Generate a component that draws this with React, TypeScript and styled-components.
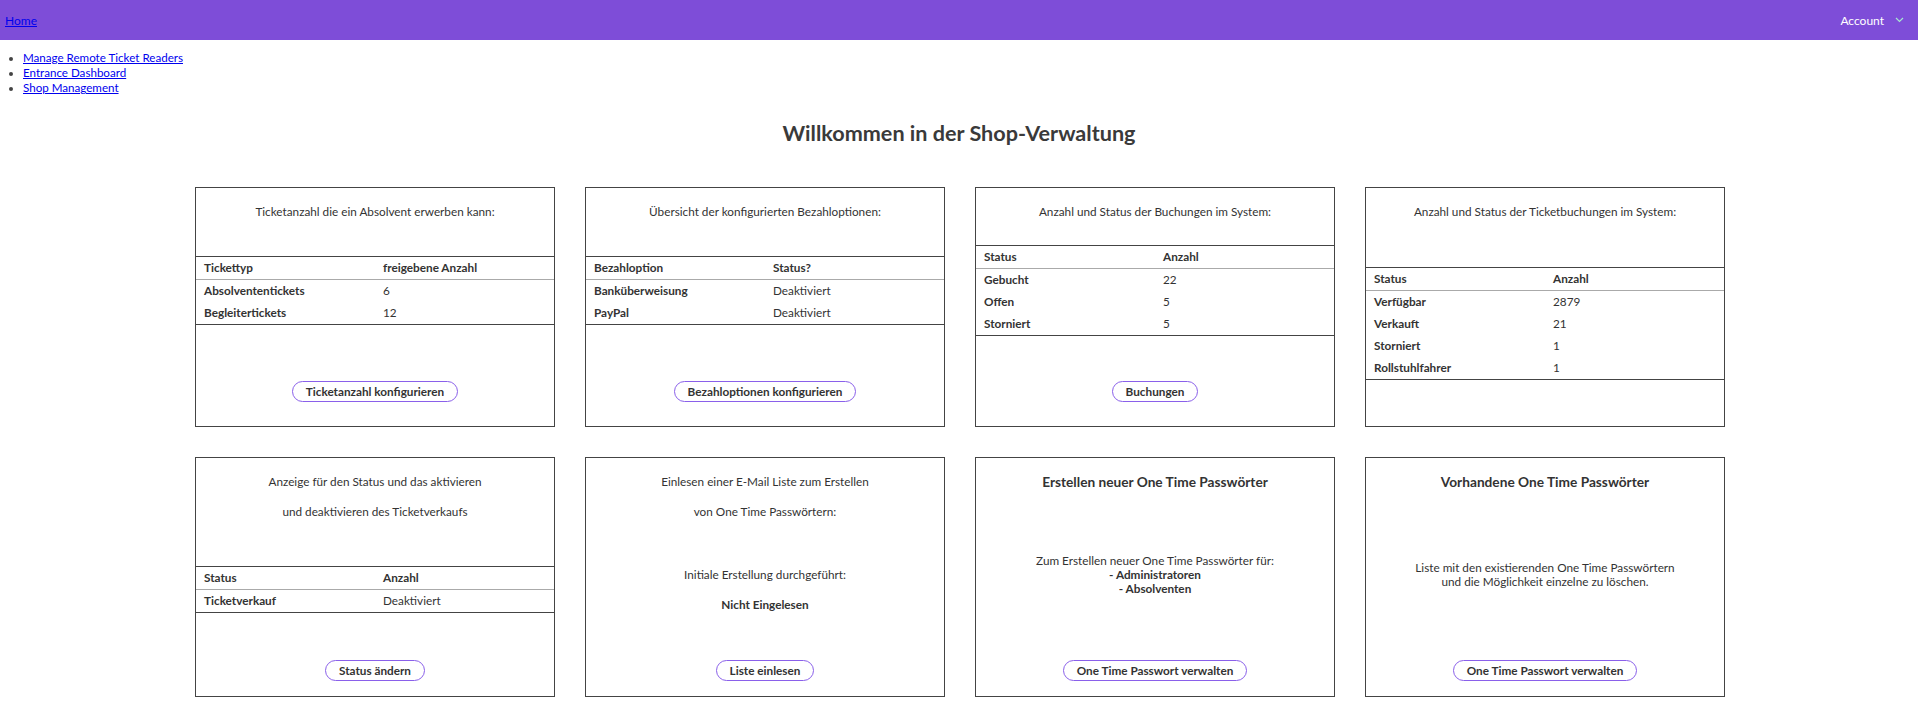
import React from "react";
import styled, { createGlobalStyle } from "styled-components";

const GlobalStyle = createGlobalStyle`
  html, body {
    margin: 0;
    padding: 0;
    background: #ffffff;
  }
  body {
    font-family: Lato, "Liberation Sans", sans-serif;
    font-size: 11.75px;
    color: #333333;
  }
`;

const TopBar = styled.header`
  height: 40px;
  background: #7e4dd8;
  display: flex;
  align-items: center;
  justify-content: space-between;
  padding: 0 14px 0 5px;
  box-sizing: border-box;
`;

const HomeLink = styled.a`
  color: #0000ee;
  text-decoration: underline;
  font-size: 12px;
`;

const AccountMenu = styled.div`
  display: flex;
  align-items: center;
  gap: 11px;
  color: #ffffff;
  font-size: 12px;
`;

const NavList = styled.ul`
  margin: 10px 0 0;
  padding-left: 23px;
  line-height: 15px;
  font-size: 11.6px;
  list-style: disc;
  li::marker {
    color: #444;
  }
`;

const NavLink = styled.a`
  color: #0000ee;
  text-decoration: underline;
`;

const PageTitle = styled.h1`
  margin: 24px 0 0;
  text-align: center;
  font-size: 21.6px;
  line-height: 28px;
  font-weight: 700;
  color: #3a3a3a;
`;

const CardGrid = styled.div`
  display: grid;
  grid-template-columns: repeat(4, 360px);
  gap: 30px;
  justify-content: center;
  margin-top: 40px;
  padding-left: 2px;
`;

const Card = styled.section<{ $buttonBottom: number }>`
  box-sizing: border-box;
  height: 240px;
  border: 1px solid #444;
  display: flex;
  flex-direction: column;
  padding-bottom: ${(p) => p.$buttonBottom}px;
`;

const Intro = styled.div`
  padding-top: 17px;
  text-align: center;
`;

const Line = styled.p<{ $bold?: boolean }>`
  margin: 0;
  line-height: 14px;
  font-weight: ${(p) => (p.$bold ? 700 : 400)};
  & + & {
    margin-top: 16px;
  }
`;

const CardHeading = styled.h2`
  margin: 0;
  font-size: 13.7px;
  line-height: 14px;
  font-weight: 700;
  color: #333;
`;

const Middle = styled.div<{ $top: number }>`
  margin-top: ${(p) => p.$top}px;
  text-align: center;
`;

const TightLine = styled.div<{ $bold?: boolean }>`
  line-height: 14px;
  font-weight: ${(p) => (p.$bold ? 700 : 400)};
`;

const DataTable = styled.table<{ $top: number }>`
  margin-top: ${(p) => p.$top}px;
  width: 100%;
  border-collapse: collapse;
  table-layout: fixed;
  border-top: 1px solid #444;
  border-bottom: 1px solid #444;
  font-size: 11.75px;
  th,
  td {
    text-align: left;
    padding: 4px 8px;
    line-height: 14px;
    color: #333;
  }
  th {
    font-weight: 700;
    border-bottom: 1px solid #aaa;
  }
  td:first-child {
    font-weight: 700;
  }
`;

const Footer = styled.div`
  margin-top: auto;
  display: flex;
  justify-content: center;
`;

const PillButton = styled.button`
  box-sizing: border-box;
  height: 21px;
  padding: 0 13px;
  border: 1px solid #8a60ea;
  border-radius: 11px;
  background: #ffffff;
  font-family: Lato, "Liberation Sans", sans-serif;
  font-size: 11.75px;
  font-weight: 700;
  color: #333;
  line-height: 19px;
  cursor: pointer;
`;

type Row = [string, string];

const Table = ({ top, head, rows }: { top: number; head: Row; rows: Row[] }) => (
  <DataTable $top={top}>
    <thead>
      <tr>
        <th>{head[0]}</th>
        <th>{head[1]}</th>
      </tr>
    </thead>
    <tbody>
      {rows.map((r) => (
        <tr key={r[0]}>
          <td>{r[0]}</td>
          <td>{r[1]}</td>
        </tr>
      ))}
    </tbody>
  </DataTable>
);

const Chevron = () => (
  <svg width="9" height="6" viewBox="0 0 9 6" fill="none">
    <path d="M1 1l3.5 3.5L8 1" stroke="#a6e8cf" strokeWidth="1.2" />
  </svg>
);

export default function App() {
  return (
    <>
      <GlobalStyle />
      <TopBar>
        <HomeLink href="#">Home</HomeLink>
        <AccountMenu>
          <span>Account</span>
          <Chevron />
        </AccountMenu>
      </TopBar>
      <NavList>
        <li>
          <NavLink href="#">Manage Remote Ticket Readers</NavLink>
        </li>
        <li>
          <NavLink href="#">Entrance Dashboard</NavLink>
        </li>
        <li>
          <NavLink href="#">Shop Management</NavLink>
        </li>
      </NavList>
      <PageTitle>Willkommen in der Shop-Verwaltung</PageTitle>
      <CardGrid>
        <Card $buttonBottom={24}>
          <Intro>
            <Line>Ticketanzahl die ein Absolvent erwerben kann:</Line>
          </Intro>
          <Table
            top={37}
            head={["Tickettyp", "freigebene Anzahl"]}
            rows={[
              ["Absolvententickets", "6"],
              ["Begleitertickets", "12"],
            ]}
          />
          <Footer>
            <PillButton>Ticketanzahl konfigurieren</PillButton>
          </Footer>
        </Card>
        <Card $buttonBottom={24}>
          <Intro>
            <Line>Übersicht der konfigurierten Bezahloptionen:</Line>
          </Intro>
          <Table
            top={37}
            head={["Bezahloption", "Status?"]}
            rows={[
              ["Banküberweisung", "Deaktiviert"],
              ["PayPal", "Deaktiviert"],
            ]}
          />
          <Footer>
            <PillButton>Bezahloptionen konfigurieren</PillButton>
          </Footer>
        </Card>
        <Card $buttonBottom={24}>
          <Intro>
            <Line>Anzahl und Status der Buchungen im System:</Line>
          </Intro>
          <Table
            top={26}
            head={["Status", "Anzahl"]}
            rows={[
              ["Gebucht", "22"],
              ["Offen", "5"],
              ["Storniert", "5"],
            ]}
          />
          <Footer>
            <PillButton>Buchungen</PillButton>
          </Footer>
        </Card>
        <Card $buttonBottom={24}>
          <Intro>
            <Line>Anzahl und Status der Ticketbuchungen im System:</Line>
          </Intro>
          <Table
            top={48}
            head={["Status", "Anzahl"]}
            rows={[
              ["Verfügbar", "2879"],
              ["Verkauft", "21"],
              ["Storniert", "1"],
              ["Rollstuhlfahrer", "1"],
            ]}
          />
        </Card>

        <Card $buttonBottom={15}>
          <Intro>
            <Line>Anzeige für den Status und das aktivieren</Line>
            <Line>und deaktivieren des Ticketverkaufs</Line>
          </Intro>
          <Table top={47} head={["Status", "Anzahl"]} rows={[["Ticketverkauf", "Deaktiviert"]]} />
          <Footer>
            <PillButton>Status ändern</PillButton>
          </Footer>
        </Card>
        <Card $buttonBottom={15}>
          <Intro>
            <Line>Einlesen einer E-Mail Liste zum Erstellen</Line>
            <Line>von One Time Passwörtern:</Line>
          </Intro>
          <Middle $top={49}>
            <Line>Initiale Erstellung durchgeführt:</Line>
            <Line $bold>Nicht Eingelesen</Line>
          </Middle>
          <Footer>
            <PillButton>Liste einlesen</PillButton>
          </Footer>
        </Card>
        <Card $buttonBottom={15}>
          <Intro>
            <CardHeading>Erstellen neuer One Time Passwörter</CardHeading>
          </Intro>
          <Middle $top={65}>
            <TightLine>Zum Erstellen neuer One Time Passwörter für:</TightLine>
            <TightLine $bold>- Administratoren</TightLine>
            <TightLine $bold>- Absolventen</TightLine>
          </Middle>
          <Footer>
            <PillButton>One Time Passwort verwalten</PillButton>
          </Footer>
        </Card>
        <Card $buttonBottom={15}>
          <Intro>
            <CardHeading>Vorhandene One Time Passwörter</CardHeading>
          </Intro>
          <Middle $top={72}>
            <TightLine>Liste mit den existierenden One Time Passwörtern</TightLine>
            <TightLine>und die Möglichkeit einzelne zu löschen.</TightLine>
          </Middle>
          <Footer>
            <PillButton>One Time Passwort verwalten</PillButton>
          </Footer>
        </Card>
      </CardGrid>
    </>
  );
}
